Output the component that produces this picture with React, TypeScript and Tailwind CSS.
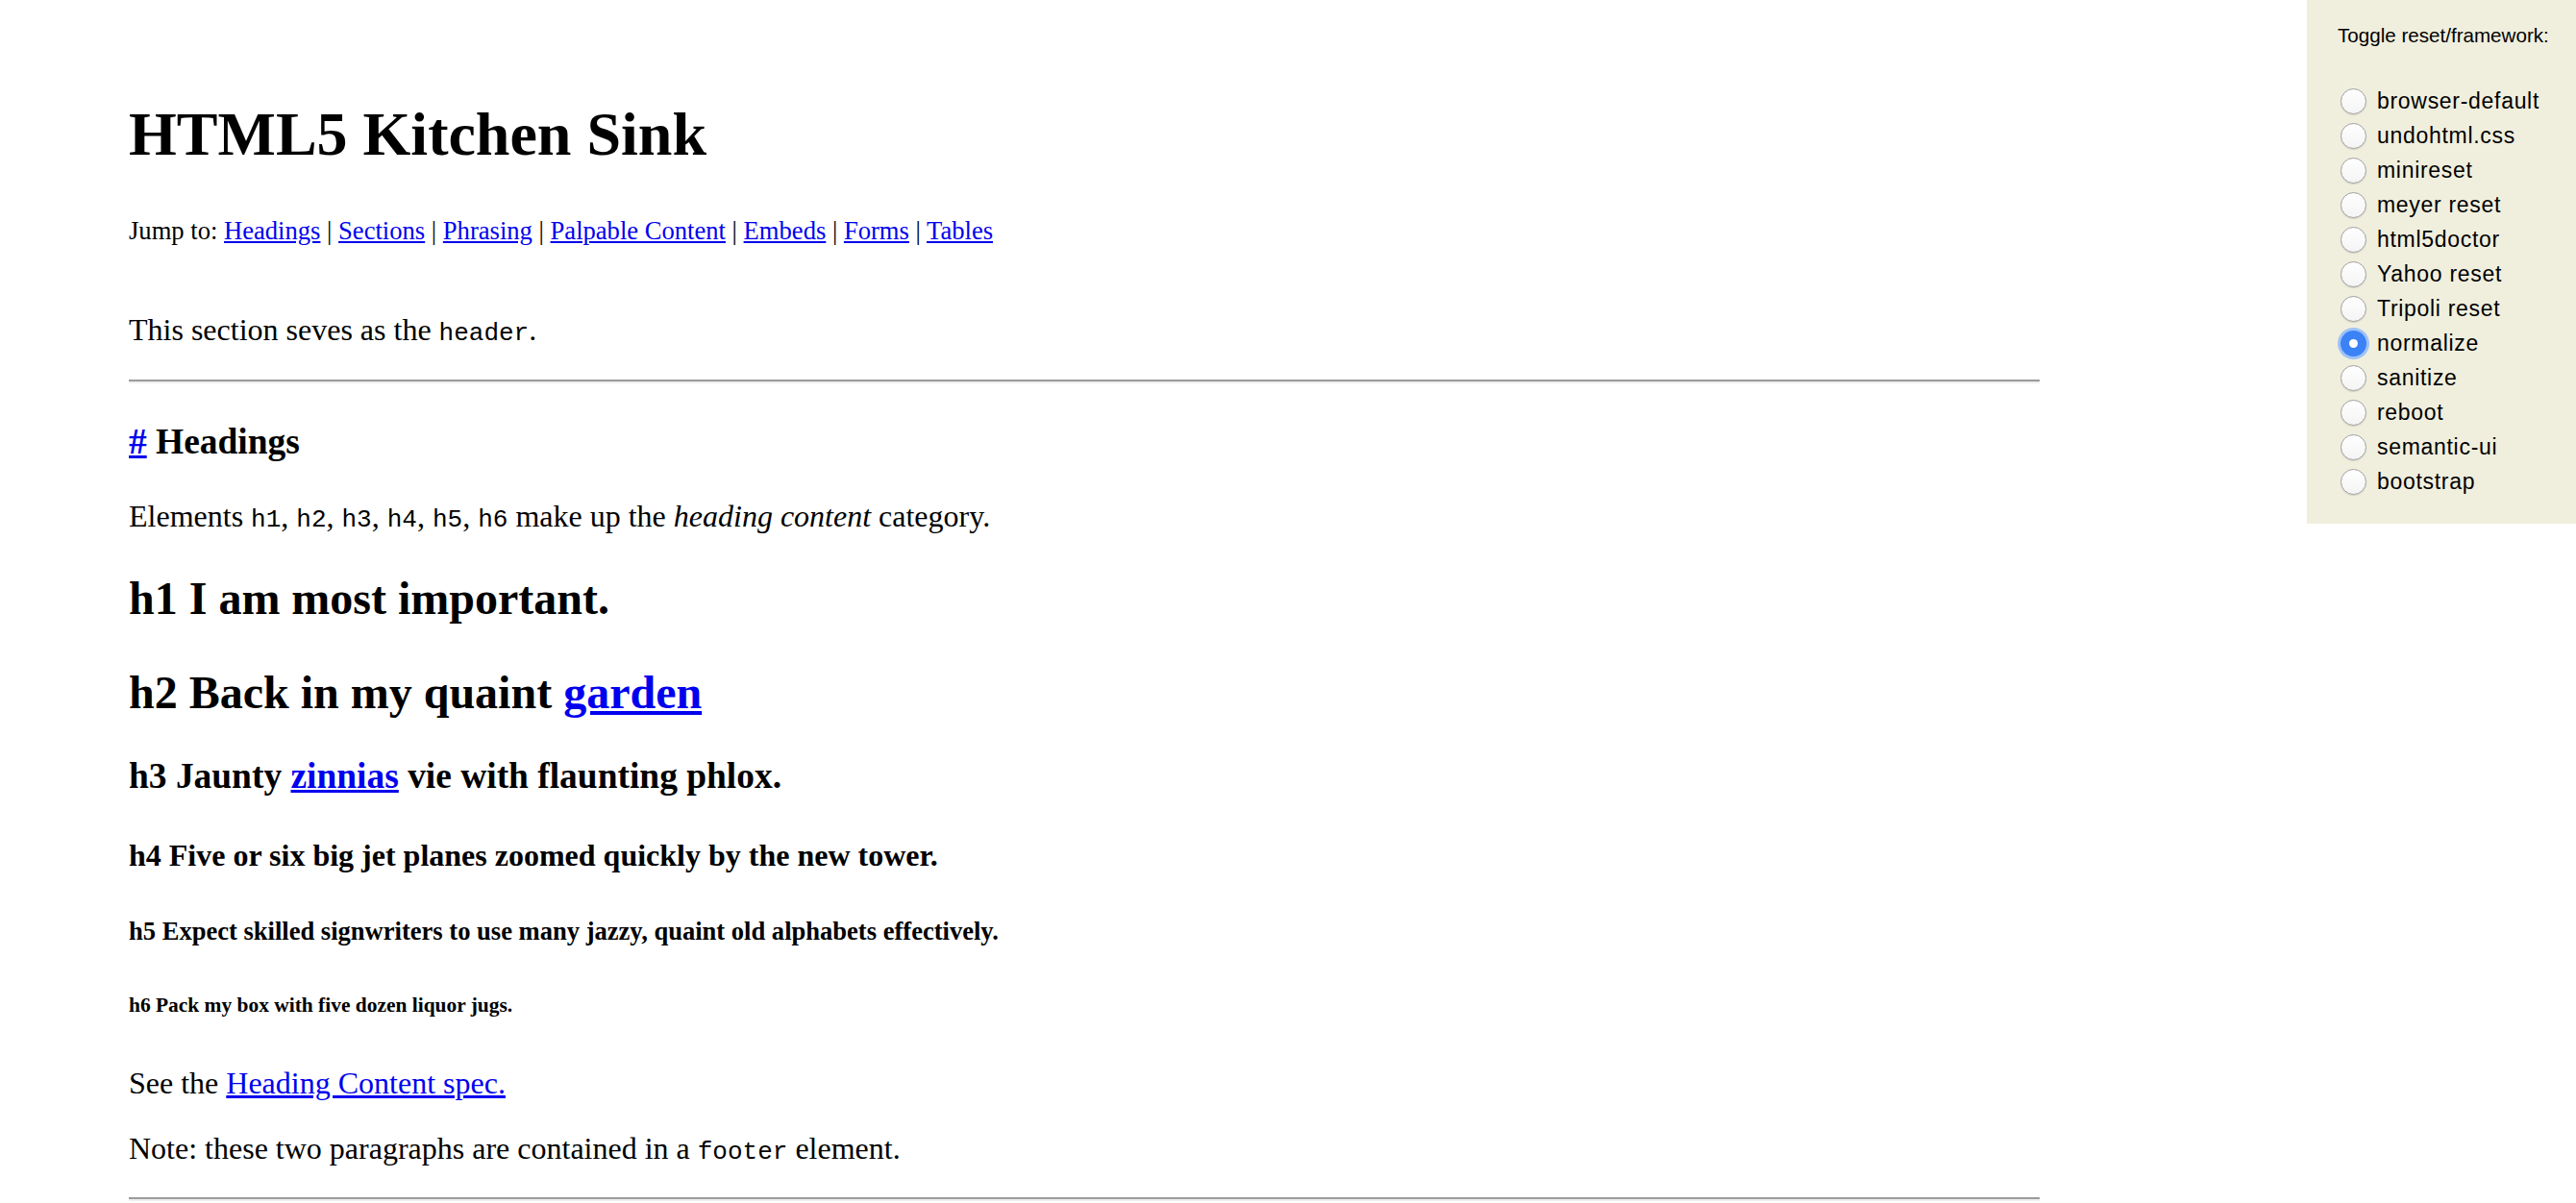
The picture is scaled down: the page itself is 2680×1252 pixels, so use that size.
const resets = [
  'browser-default',
  'undohtml.css',
  'minireset',
  'meyer reset',
  'html5doctor',
  'Yahoo reset',
  'Tripoli reset',
  'normalize',
  'sanitize',
  'reboot',
  'semantic-ui',
  'bootstrap',
];

function Rule() {
  return <div className="h-0 w-full border-t-2 border-b-2 border-t-[#9a9a9a] border-b-[#eeeeee]" />;
}

function Code({ children }: { children: string }) {
  return <code className="font-['Liberation_Mono','Courier_New',monospace] text-[26px]">{children}</code>;
}

function A({ children }: { children: string }) {
  return <a href="#" className="text-[#0000ee] underline">{children}</a>;
}

function Radio({ checked }: { checked: boolean }) {
  if (checked) {
    return (
      <span className="flex h-[27px] w-[27px] shrink-0 items-center justify-center rounded-full bg-[#3b82f6] ring-[3px] ring-[#9fc2f7]">
        <span className="h-[9px] w-[9px] rounded-full bg-white" />
      </span>
    );
  }
  return (
    <span className="h-[27px] w-[27px] shrink-0 rounded-full border-[1.5px] border-[#a0a0a0] bg-gradient-to-b from-white to-[#f4f4f4] shadow-[0_1px_1px_rgba(0,0,0,0.12)]" />
  );
}

export default function App() {
  return (
    <div className="flex min-h-screen items-start bg-white text-black">
      <main className="w-[2400px] shrink-0 pl-[134px] pt-[102px] font-['Liberation_Serif','Times_New_Roman',serif]">
        <div className="flex w-[1988px] flex-col">
          <h1 className="text-[64px] font-bold leading-[1.2]">HTML5 Kitchen Sink</h1>

          <nav className="mt-[46px] text-[26.6px] leading-[1.2]">
            Jump to: <A>Headings</A> | <A>Sections</A> | <A>Phrasing</A> | <A>Palpable Content</A> |{' '}
            <A>Embeds</A> | <A>Forms</A> | <A>Tables</A>
          </nav>

          <p className="mt-[67px] text-[32px] leading-[1.2]">
            This section seves as the <Code>header</Code>.
          </p>

          <div className="mt-[32px]">
            <Rule />
          </div>

          <h2 className="mt-[39px] text-[37.44px] font-bold leading-[1.2]">
            <A>#</A> Headings
          </h2>

          <p className="mt-[35px] text-[32px] leading-[1.2]">
            Elements <Code>h1</Code>, <Code>h2</Code>, <Code>h3</Code>, <Code>h4</Code>, <Code>h5</Code>,{' '}
            <Code>h6</Code> make up the <em>heading content</em> category.
          </p>

          <h1 className="mt-[37px] text-[48px] font-bold leading-[1.2]">h1 I am most important.</h1>
          <h2 className="mt-[40px] text-[48px] font-bold leading-[1.2]">
            h2 Back in my quaint <A>garden</A>
          </h2>
          <h3 className="mt-[37px] text-[37.44px] font-bold leading-[1.2]">
            h3 Jaunty <A>zinnias</A> vie with flaunting phlox.
          </h3>
          <h4 className="mt-[40px] text-[32px] font-bold leading-[1.2]">
            h4 Five or six big jet planes zoomed quickly by the new tower.
          </h4>
          <h5 className="mt-[44px] text-[26.56px] font-bold leading-[1.2]">
            h5 Expect skilled signwriters to use many jazzy, quaint old alphabets effectively.
          </h5>
          <h6 className="mt-[49px] text-[21.44px] font-bold leading-[1.2]">h6 Pack my box with five dozen liquor jugs.</h6>

          <p className="mt-[48px] text-[32px] leading-[1.2]">
            See the <A>Heading Content spec.</A>
          </p>
          <p className="mt-[30px] text-[32px] leading-[1.2]">
            Note: these two paragraphs are contained in a <Code>footer</Code> element.
          </p>

          <div className="mt-[30px]">
            <Rule />
          </div>
        </div>
      </main>

      <aside className="h-[545px] w-[280px] shrink-0 bg-[#f0efde] font-['Liberation_Sans',Arial,sans-serif]">
        <div className="pl-[32px] pt-[25px] text-[20.6px] leading-[24px]">Toggle reset/framework:</div>
        <ul className="mt-[38px] flex flex-col pl-[35px]">
          {resets.map((name) => (
            <li key={name} className="flex h-[36px] items-center gap-[11px] text-[23px] tracking-[0.7px]">
              <Radio checked={name === 'normalize'} />
              <span>{name}</span>
            </li>
          ))}
        </ul>
      </aside>
    </div>
  );
}
